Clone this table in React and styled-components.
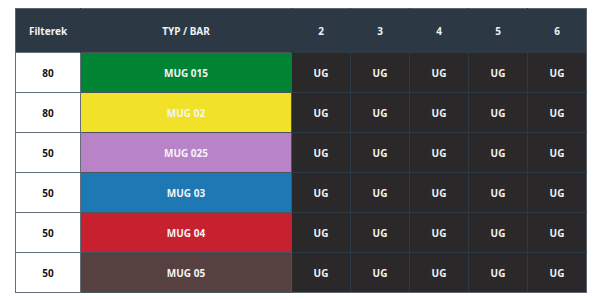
import styled, { createGlobalStyle } from "styled-components";

const GlobalStyle = createGlobalStyle`
  html, body {
    margin: 0;
    padding: 0;
    background: #ffffff;
    font-family: "Noto Sans", "Liberation Sans", sans-serif;
  }
`;

const Page = styled.div`
  width: 600px;
  height: 300px;
  padding: 8px 0 0 15px;
  box-sizing: border-box;
`;

const Table = styled.table`
  width: 572px;
  border-collapse: collapse;
  table-layout: fixed;
  font-size: 10px;
  font-weight: 700;
`;

const HeadRow = styled.tr`
  height: 44px;
  background: #2c3844;
`;

const HeadCell = styled.th`
  color: #eef1f3;
  font-weight: 700;
  text-align: center;
  padding: 0;
  border-top: 1px solid #5b6670;
  border-left: 1px solid ${(p) => (p.$first ? "#5b6670" : "#2c3844")};
  border-right: 1px solid ${(p) => (p.$last ? "#5b6670" : "#2c3844")};
`;

const Row = styled.tr`
  height: 40px;
`;

const FilterCell = styled.td`
  background: #ffffff;
  color: #151515;
  text-align: center;
  padding: 0;
  border: 1px solid #646e78;
`;

const TypeCell = styled.td`
  background: ${(p) => p.$bg};
  color: #f4f4f4;
  text-align: center;
  padding: 0;
  border: 1px solid #4a545e;
`;

const UgCell = styled.td`
  background: #2a2828;
  color: #f2f2f2;
  text-align: center;
  padding: 0;
  border: 1px solid #2d3a46;
  border-right-color: ${(p) => (p.$last ? "#5b6670" : "#2d3a46")};
  border-bottom-color: ${(p) => (p.$bottom ? "#5b6670" : "#2d3a46")};
`;

const rows = [
  { filter: 80, name: "MUG 015", bg: "#008433" },
  { filter: 80, name: "MUG 02", bg: "#f1e229" },
  { filter: 50, name: "MUG 025", bg: "#b983c7" },
  { filter: 50, name: "MUG 03", bg: "#1e78b3" },
  { filter: 50, name: "MUG 04", bg: "#c7202f" },
  { filter: 50, name: "MUG 05", bg: "#564040" },
];

const cols = [2, 3, 4, 5, 6];

export default function App() {
  return (
    <Page>
      <GlobalStyle />
      <Table>
        <colgroup>
          <col style={{ width: 65 }} />
          <col style={{ width: 211 }} />
          {cols.map((c) => (
            <col key={c} style={{ width: 59 }} />
          ))}
        </colgroup>
        <thead>
          <HeadRow>
            <HeadCell $first>Filterek</HeadCell>
            <HeadCell>TYP / BAR</HeadCell>
            {cols.map((c, i) => (
              <HeadCell key={c} $last={i === cols.length - 1}>
                {c}
              </HeadCell>
            ))}
          </HeadRow>
        </thead>
        <tbody>
          {rows.map((r, ri) => (
            <Row key={r.name}>
              <FilterCell>{r.filter}</FilterCell>
              <TypeCell $bg={r.bg}>{r.name}</TypeCell>
              {cols.map((c, i) => (
                <UgCell
                  key={c}
                  $last={i === cols.length - 1}
                  $bottom={ri === rows.length - 1}
                >
                  UG
                </UgCell>
              ))}
            </Row>
          ))}
        </tbody>
      </Table>
    </Page>
  );
}
